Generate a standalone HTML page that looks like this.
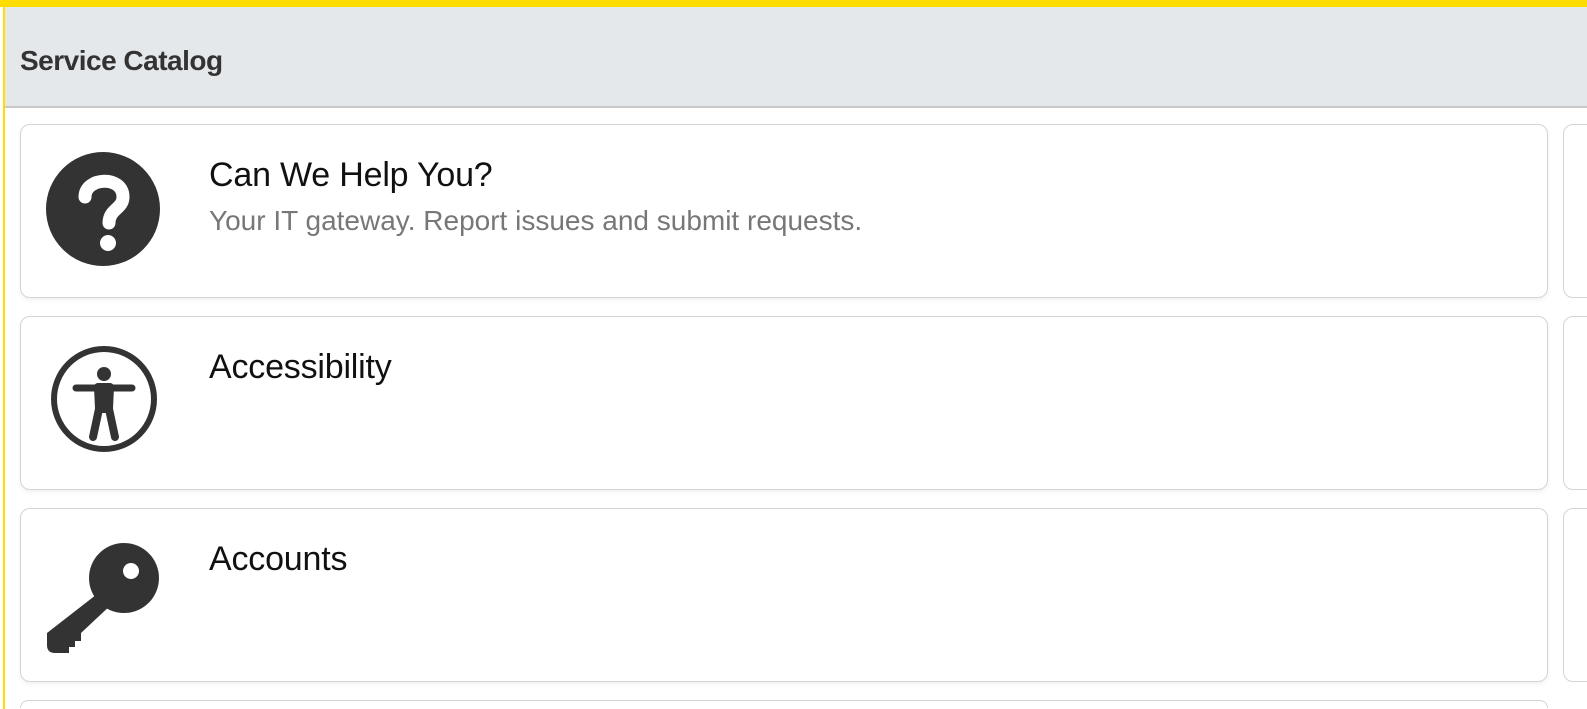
<!DOCTYPE html>
<html><head><style>
html,body{margin:0;padding:0;width:1587px;height:709px;overflow:hidden;background:#fff;font-family:"Liberation Sans",sans-serif;}
#w{position:relative;width:1587px;height:709px;overflow:hidden;}
.top{position:absolute;left:0;top:0;width:1587px;height:7px;background:#ffdd00;}
.lline{position:absolute;left:3px;top:0;width:2px;height:709px;background:#ffdd00;}
.hdr{position:absolute;left:5px;top:7px;width:1582px;height:99px;background:#e5e8eb;border-bottom:2px solid #c8c8c8;}
.hdr span{position:absolute;left:15px;top:38px;font-size:28px;font-weight:bold;color:#333;letter-spacing:-0.5px;}
.card{position:absolute;left:20px;width:1526px;height:172px;border:1.5px solid #d4d4d4;border-radius:10px;background:#fff;box-shadow:0 2px 4px rgba(0,0,0,0.06);}
.card2{position:absolute;left:1563px;width:40px;height:172px;border:1.5px solid #d4d4d4;border-radius:10px;background:#fff;}
.t{position:absolute;left:188px;top:31px;font-size:34px;color:#111;letter-spacing:-0.2px;}
.s{position:absolute;left:188px;top:80px;font-size:28px;color:#777;letter-spacing:0px;}
svg{position:absolute;left:20px;top:20px;}
</style></head><body><div id="w">
<div class="top"></div><div class="lline"></div>
<div class="hdr"><span>Service Catalog</span></div>
<div class="card" style="top:124px">
<svg width="130" height="130" viewBox="0 0 130 130"><circle cx="62" cy="64" r="57" fill="#333"/>
<path d="M44 52 C44 32 82 30 82 52 C82 64 68 64 68 78" stroke="#fff" stroke-width="13" fill="none" stroke-linecap="round"/>
<circle cx="67" cy="98" r="8" fill="#fff"/></svg>
<div class="t">Can We Help You?</div><div class="s">Your IT gateway. Report issues and submit requests.</div></div>
<div class="card" style="top:316px">
<svg width="130" height="130" viewBox="0 0 130 130"><circle cx="63" cy="62" r="50" fill="none" stroke="#333" stroke-width="6"/>
<circle cx="63" cy="37" r="7" fill="#333"/>
<path d="M35 51 L91 51" stroke="#333" stroke-width="7" stroke-linecap="round"/>
<path d="M57 50 L69 50 L68 72 L74 100 M57 50 L58 72 L52 100" stroke="#333" stroke-width="8" fill="none" stroke-linecap="round" stroke-linejoin="round"/>
<rect x="56" y="48" width="14" height="28" fill="#333"/></svg>
<div class="t">Accessibility</div></div>
<div class="card" style="top:508px">
<svg width="130" height="130" viewBox="0 0 130 130"><circle cx="83" cy="49" r="35" fill="#333"/>
<path d="M60 62 L72 74 L40 104 L40 112 L34 112 L34 118 L28 118 L28 124 L14 124 Q6 124 6 116 L6 104 Z" fill="#333"/>
<circle cx="90" cy="42" r="8" fill="#fff"/></svg>
<div class="t">Accounts</div></div>
<div class="card" style="top:700px;height:7px;border-bottom:none;border-radius:10px 10px 0 0;box-shadow:none"></div>
<div class="card2" style="top:124px"></div>
<div class="card2" style="top:316px"></div>
<div class="card2" style="top:508px"></div>
</div></body></html>
